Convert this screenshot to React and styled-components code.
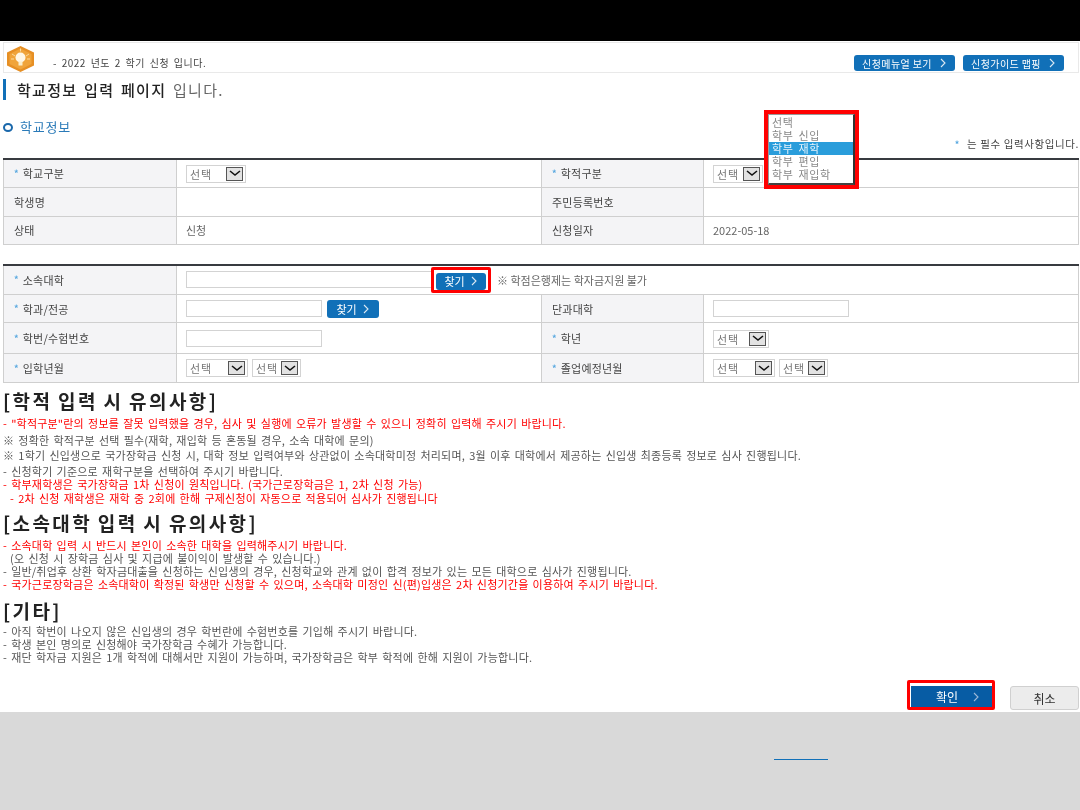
import styled, { createGlobalStyle } from 'styled-components';

const GlobalStyle = createGlobalStyle`
  html, body {
    margin: 0;
    padding: 0;
    background: #d9d9d9;
  }
  body {
    font-family: "Noto Sans CJK KR", "Liberation Sans", sans-serif;
    font-size: 11px;
    color: #555;
    overflow: hidden;
  }
`;

const Chevron = ({ size = 8, color = '#dbe8f3' }) => (
  <svg width={size} height={size + 2} viewBox="0 0 8 10" fill="none">
    <path d="M2 1l4 4-4 4" stroke={color} strokeWidth="1.1" />
  </svg>
);

const BulbLogo = () => (
  <svg width="29" height="26" viewBox="0 0 29 26">
    <path d="M14.500 0L28 6.500v13L14.500 26 1 19.500v-13z" fill="#e68f24" />
    <path d="M14.500 2.500L25.500 8v10L14.500 23.500 3.500 18V8z" fill="#f0a43a" />
    <circle cx="14.500" cy="11.500" r="5" fill="#fff7e6" />
    <rect x="12.500" y="15.500" width="4" height="4" fill="#fbeecb" />
    <path d="M6 8l3 2M23 8l-3 2M5 13h3M24 13h-3M14.500 2.500v3" stroke="#fbdca0" strokeWidth="1" />
  </svg>
);

const SelectBox = ({ width }) => (
  <StyledSelect $width={width}>
    <SelectText>선택</SelectText>
    <ArrowBox>
      <svg width="12" height="7" viewBox="0 0 12 7" fill="none">
        <path d="M1 1l5 4 5-4" stroke="#111" strokeWidth="1.6" />
      </svg>
    </ArrowBox>
  </StyledSelect>
);

const Label = ({ star, children }) => (
  <LabelText>
    {star && <Star>*</Star>}
    {children}
  </LabelText>
);

export default function App() {
  return (
    <>
      <GlobalStyle />
      <Page>
        <TopBar />
        <Content>
          <Notice>
            <NoticeLeft>
              <BulbLogo />
              <NoticeText>- 2022 년도 2 학기 신청 입니다.</NoticeText>
            </NoticeLeft>
            <NoticeButtons>
              <GuideButton>
                신청메뉴얼 보기 <Chevron />
              </GuideButton>
              <GuideButton>
                신청가이드 맵핑 <Chevron />
              </GuideButton>
            </NoticeButtons>
          </Notice>

          <PageTitle>
            <strong>학교정보 입력 페이지</strong> 입니다.
          </PageTitle>

          <SectionHead>
            <Ring />
            학교정보
          </SectionHead>
          <RequiredNote>
            <Star>*</Star> 는 필수 입력사항입니다.
          </RequiredNote>

          <FormTable>
            <Cols />
            <tbody>
              <Row $h={28}>
                <Th><Label star>학교구분</Label></Th>
                <Td><SelectBox width={60} /></Td>
                <Th><Label star>학적구분</Label></Th>
                <Td $anchor>
                  <SelectBox width={50} />
                  <OpenList>
                    <ListInner>
                      <ListItem>선택</ListItem>
                      <ListItem>학부 신입</ListItem>
                      <ListItem $active>학부 재학</ListItem>
                      <ListItem>학부 편입</ListItem>
                      <ListItem>학부 재입학</ListItem>
                    </ListInner>
                  </OpenList>
                </Td>
              </Row>
              <Row $h={29}>
                <Th><Label>학생명</Label></Th>
                <Td />
                <Th><Label>주민등록번호</Label></Th>
                <Td />
              </Row>
              <Row $h={28}>
                <Th><Label>상태</Label></Th>
                <Td>신청</Td>
                <Th><Label>신청일자</Label></Th>
                <Td>2022-05-18</Td>
              </Row>
            </tbody>
          </FormTable>

          <SecondTable>
            <Cols />
            <tbody>
              <Row $h={30}>
                <Th><Label star>소속대학</Label></Th>
                <Td colSpan={3}>
                  <InlineRow>
                    <TextInput $width={246} />
                    <MarkedFind>
                      <BlueButton $width={50} $height={17}>
                        찾기 <Chevron />
                      </BlueButton>
                    </MarkedFind>
                    <InlineNote>※ 학점은행제는 학자금지원 불가</InlineNote>
                  </InlineRow>
                </Td>
              </Row>
              <Row $h={28}>
                <Th><Label star>학과/전공</Label></Th>
                <Td>
                  <InlineRow>
                    <TextInput $width={136} />
                    <BlueButton $width={52} $height={18}>
                      찾기 <Chevron />
                    </BlueButton>
                  </InlineRow>
                </Td>
                <Th><Label>단과대학</Label></Th>
                <Td><TextInput $width={136} /></Td>
              </Row>
              <Row $h={31}>
                <Th><Label star>학번/수험번호</Label></Th>
                <Td><TextInput $width={136} /></Td>
                <Th><Label star>학년</Label></Th>
                <Td><SelectBox width={56} /></Td>
              </Row>
              <Row $h={29}>
                <Th><Label star>입학년월</Label></Th>
                <Td>
                  <InlineRow $gap={4}>
                    <SelectBox width={62} />
                    <SelectBox width={49} />
                  </InlineRow>
                </Td>
                <Th><Label star>졸업예정년월</Label></Th>
                <Td>
                  <InlineRow $gap={4}>
                    <SelectBox width={62} />
                    <SelectBox width={49} />
                  </InlineRow>
                </Td>
              </Row>
            </tbody>
          </SecondTable>

          <NoteHeading $top={8}>[학적 입력 시 유의사항]</NoteHeading>
          <NoteList $top={7}>
            <NoteLine $red $h={17}>- "학적구분"란의 정보를 잘못 입력했을 경우, 심사 및 실행에 오류가 발생할 수 있으니 정확히 입력해 주시기 바랍니다.</NoteLine>
            <NoteLine $h={15}>※ 정확한 학적구분 선택 필수(재학, 재입학 등 혼동될 경우, 소속 대학에 문의)</NoteLine>
            <NoteLine $h={16}>※ 1학기 신입생으로 국가장학금 신청 시, 대학 정보 입력여부와 상관없이 소속대학미정 처리되며, 3월 이후 대학에서 제공하는 신입생 최종등록 정보로 심사 진행됩니다.</NoteLine>
            <NoteLine>- 신청학기 기준으로 재학구분을 선택하여 주시기 바랍니다.</NoteLine>
            <NoteLine $red $h={14}>- 학부재학생은 국가장학금 1차 신청이 원칙입니다. (국가근로장학금은 1, 2차 신청 가능)</NoteLine>
            <NoteLine $red $h={14} $indent>- 2차 신청 재학생은 재학 중 2회에 한해 구제신청이 자동으로 적용되어 심사가 진행됩니다</NoteLine>
          </NoteList>

          <NoteHeading $top={7}>[소속대학 입력 시 유의사항]</NoteHeading>
          <NoteList $top={7}>
            <NoteLine $red>- 소속대학 입력 시 반드시 본인이 소속한 대학을 입력해주시기 바랍니다.</NoteLine>
            <NoteLine $indent>(오 신청 시 장학금 심사 및 지급에 불이익이 발생할 수 있습니다.)</NoteLine>
            <NoteLine>- 일반/취업후 상환 학자금대출을 신청하는 신입생의 경우, 신청학교와 관계 없이 합격 정보가 있는 모든 대학으로 심사가 진행됩니다.</NoteLine>
            <NoteLine $red>- 국가근로장학금은 소속대학이 확정된 학생만 신청할 수 있으며, 소속대학 미정인 신(편)입생은 2차 신청기간을 이용하여 주시기 바랍니다.</NoteLine>
          </NoteList>

          <NoteHeading $top={10}>[기타]</NoteHeading>
          <NoteList $top={5}>
            <NoteLine>- 아직 학번이 나오지 않은 신입생의 경우 학번란에 수험번호를 기입해 주시기 바랍니다.</NoteLine>
            <NoteLine>- 학생 본인 명의로 신청해야 국가장학금 수혜가 가능합니다.</NoteLine>
            <NoteLine>- 재단 학자금 지원은 1개 학적에 대해서만 지원이 가능하며, 국가장학금은 학부 학적에 한해 지원이 가능합니다.</NoteLine>
          </NoteList>

          <Actions>
            <ConfirmWrap>
              <ConfirmButton>
                <span>확인</span>
                <Chevron color="#9db9d8" />
              </ConfirmButton>
            </ConfirmWrap>
            <CancelButton>취소</CancelButton>
          </Actions>
        </Content>
        <Footer>
          <FooterLine />
        </Footer>
      </Page>
    </>
  );
}

const Cols = () => (
  <colgroup>
    <col width="173" />
    <col width="365" />
    <col width="162" />
    <col />
  </colgroup>
);

const Page = styled.div`
  width: 1080px;
  height: 810px;
  display: flex;
  flex-direction: column;
`;

const TopBar = styled.div`
  height: 41px;
  background: #000;
`;

const Content = styled.div`
  height: 671px;
  background: #fff;
  padding: 1px 1px 0 3px;
  box-sizing: border-box;
  display: flex;
  flex-direction: column;
  filter: blur(0.35px);
`;

const Notice = styled.div`
  height: 31px;
  box-sizing: border-box;
  border: 1px solid #e9e9e9;
  display: flex;
  justify-content: space-between;
  padding: 3px 14px 0 2px;
`;

const NoticeLeft = styled.div`
  display: flex;
  align-items: flex-start;
  gap: 18px;
`;

const NoticeText = styled.span`
  margin-top: 11px;
  font-size: 10px;
  line-height: 12px;
  word-spacing: 2px;
  letter-spacing: 0.5px;
  color: #444;
`;

const NoticeButtons = styled.div`
  display: flex;
  gap: 8px;
  padding-top: 9px;
`;

const GuideButton = styled.div`
  width: 101px;
  height: 16px;
  border-radius: 3px;
  background: #1170b8;
  color: #fff;
  font-size: 10px;
  display: flex;
  align-items: center;
  justify-content: center;
  gap: 7px;
  letter-spacing: 0.4px;
`;

const PageTitle = styled.h1`
  margin: 6px 0 0;
  height: 21px;
  flex: none;
  border-left: 3px solid #1170b8;
  padding-left: 11px;
  font-size: 15px;
  font-weight: 400;
  line-height: 21px;
  letter-spacing: 1.3px;
  word-spacing: 2px;
  color: #666;

  strong {
    font-weight: 500;
    color: #222;
  }
`;

const SectionHead = styled.h2`
  margin: 17px 0 0;
  height: 18px;
  flex: none;
  display: flex;
  align-items: center;
  gap: 7px;
  font-size: 13px;
  font-weight: 400;
  letter-spacing: 0.8px;
  color: #2a7ab8;
`;

const Ring = styled.i`
  width: 10px;
  height: 9px;
  box-sizing: border-box;
  border: 2.500px solid #1a68ab;
  border-radius: 50%;
  margin-top: 3px;
`;

const RequiredNote = styled.div`
  height: 13px;
  flex: none;
  line-height: 13px;
  margin-top: 2px;
  font-size: 10.500px;
  text-align: right;
  letter-spacing: 0.6px;
  white-space: nowrap;
  color: #444;
`;

const FormTable = styled.table`
  width: 1076px;
  flex: none;
  margin-top: 8px;
  border-collapse: collapse;
  table-layout: fixed;
  border-top: 2px solid #383b40;
`;

const SecondTable = styled(FormTable)`
  margin-top: 19px;
`;

const Row = styled.tr`
  height: ${props => props.$h}px;
`;

const Th = styled.th`
  padding: 0 0 0 10px;
  background: #f4f4f6;
  border: 1px solid #cfcfcf;
  font-weight: 400;
  text-align: left;
`;

const Td = styled.td`
  padding: 0 0 0 9px;
  border: 1px solid #cfcfcf;
  color: #666;
  position: ${props => (props.$anchor ? 'relative' : 'static')};
`;

const LabelText = styled.span`
  display: flex;
  align-items: center;
  color: #444;
  letter-spacing: 0.2px;
`;

const Star = styled.span`
  color: #58a8e0;
  margin-right: 4px;
  font-size: 9px;
  font-weight: 700;
`;

const StyledSelect = styled.div`
  width: ${props => props.$width}px;
  height: 18px;
  box-sizing: border-box;
  border: 1px solid #d3d3d3;
  display: inline-flex;
  align-items: center;
  justify-content: space-between;
  padding: 0 2px 0 3px;
  background: #fff;
  vertical-align: middle;
`;

const SelectText = styled.span`
  color: #777;
  letter-spacing: 1px;
  line-height: 14px;
  white-space: nowrap;
`;

const ArrowBox = styled.span`
  width: 17px;
  height: 14px;
  flex: none;
  box-sizing: border-box;
  border: 1px solid #555;
  background: #e2e2e2;
  display: flex;
  align-items: center;
  justify-content: center;
`;

const OpenList = styled.div`
  position: absolute;
  left: 60px;
  top: -50px;
  width: 95px;
  height: 79px;
  box-sizing: border-box;
  border: 4px solid #f00;
  z-index: 2;
  background: #fff;
`;

const ListInner = styled.div`
  height: 100%;
  box-sizing: border-box;
  padding-top: 1px;
  background: #fff;
  border-style: solid;
  border-width: 1px 2px 2px 1px;
  border-color: #999 #333 #444 #999;
`;

const ListItem = styled.div`
  height: 13px;
  line-height: 13px;
  padding-left: 3px;
  letter-spacing: 0.6px;
  word-spacing: 2px;
  color: ${props => (props.$active ? '#e6f3fb' : '#888')};
  background: ${props => (props.$active ? '#2a9ddb' : 'transparent')};
`;

const InlineRow = styled.div`
  display: flex;
  align-items: center;
  gap: ${props => props.$gap || 5}px;
`;

const TextInput = styled.div`
  width: ${props => props.$width}px;
  height: 17px;
  box-sizing: border-box;
  border: 1px solid #d3d3d3;
  background: #fff;
`;

const MarkedFind = styled.div`
  margin-left: -6px;
  padding: 3px 2px 0;
  border: 3px solid #f00;
  border-radius: 2px;
`;

const BlueButton = styled.div`
  width: ${props => props.$width}px;
  height: ${props => props.$height}px;
  border-radius: 3px;
  background: #1170b8;
  color: #fff;
  display: flex;
  align-items: center;
  justify-content: center;
  gap: 5px;
`;

const InlineNote = styled.span`
  margin-left: 1px;
  color: #666;
`;

const NoteHeading = styled.h3`
  margin: ${props => props.$top}px 0 0;
  height: 19px;
  flex: none;
  font-size: 19px;
  font-weight: 700;
  line-height: 19px;
  letter-spacing: 2.400px;
  word-spacing: -1px;
  white-space: nowrap;
  color: #222;
`;

const NoteList = styled.ul`
  margin: ${props => props.$top}px 0 0;
  padding: 0;
  list-style: none;
`;

const NoteLine = styled.li`
  height: ${props => props.$h || 13}px;
  line-height: 13px;
  white-space: nowrap;
  padding-left: ${props => (props.$indent ? 7 : 0)}px;
  letter-spacing: 0.2px;
  word-spacing: 1.500px;
  color: ${props => (props.$red ? '#f00' : '#555')};
`;

const Actions = styled.div`
  margin: auto 0 2px;
  display: flex;
  justify-content: flex-end;
  align-items: flex-end;
  gap: 15px;
`;

const ConfirmWrap = styled.div`
  box-sizing: border-box;
  width: 88px;
  height: 30px;
  padding: 3px 0 0 1px;
  border: 3px solid #f00;
  border-radius: 2px;
  background: #fff;
`;

const ConfirmButton = styled.div`
  height: 21px;
  background: #075ca4;
  color: #fff;
  display: flex;
  align-items: center;
  justify-content: center;
  gap: 14px;
  padding-left: 13px;
  font-size: 12px;
`;

const CancelButton = styled.div`
  width: 69px;
  height: 24px;
  box-sizing: border-box;
  border: 1px solid #d0d0d0;
  border-radius: 3px;
  background: #ececec;
  color: #333;
  display: flex;
  align-items: center;
  justify-content: center;
  font-size: 12px;
`;

const Footer = styled.div`
  flex: 1;
  background: #d9d9d9;
  padding: 47px 0 0 774px;
`;

const FooterLine = styled.div`
  width: 54px;
  height: 1px;
  background: #1170b8;
`;
